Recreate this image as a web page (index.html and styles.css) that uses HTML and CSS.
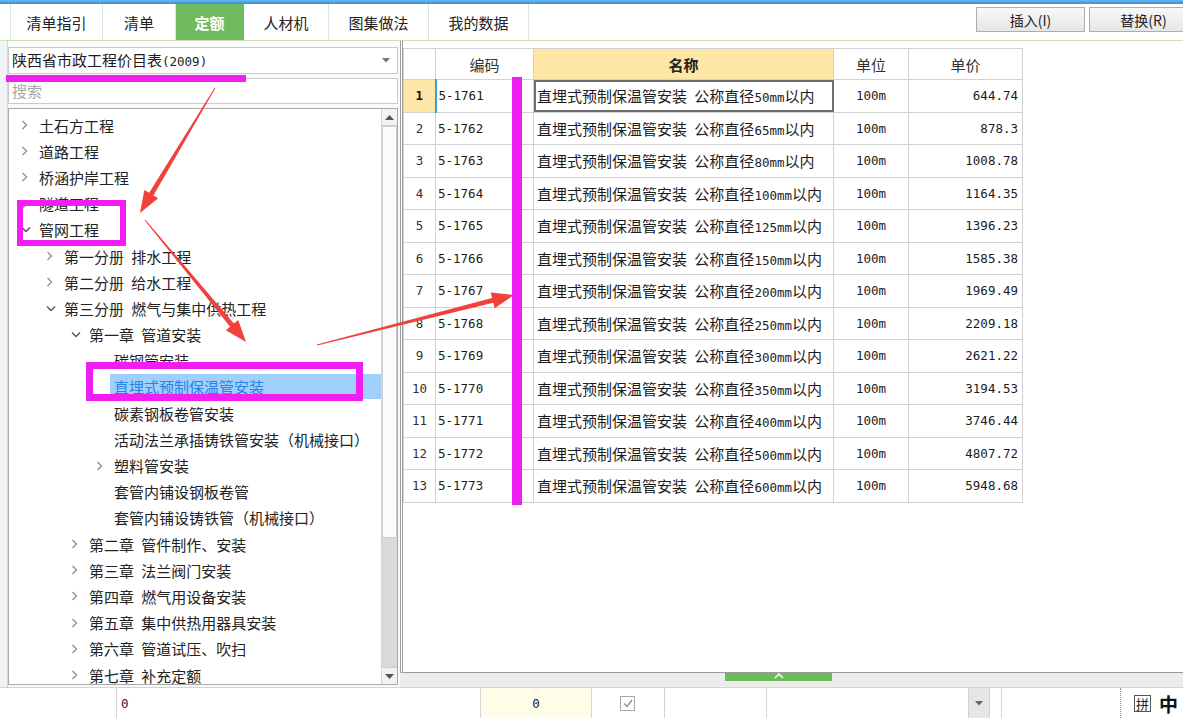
FILE: index.html
```html
<!DOCTYPE html>
<html lang="zh-CN">
<head>
<meta charset="utf-8">
<title>定额</title>
<link rel="stylesheet" href="styles.css">
</head>
<body>
<div class="app">
  <div class="topline"></div>
  <div class="tabbar">
    <div class="tabs">
      <div class="tab t1">清单指引</div>
      <div class="tab t2">清单</div>
      <div class="tab t3 active">定额</div>
      <div class="tab t4">人材机</div>
      <div class="tab t5">图集做法</div>
      <div class="tab t6">我的数据</div>
    </div>
    <div class="actions">
      <button class="btn">插入(I)</button>
      <button class="btn">替换(R)</button>
    </div>
  </div>

  <div class="main">
    <div class="left">
      <div class="edge"></div>
      <div class="leftcol">
        <div class="select">
          <span>陕西省市政工程价目表<span class="mono">(2009)</span></span>
          <svg class="sel-arrow" width="8" height="5" viewBox="0 0 8 5"><polygon points="0,0 8,0 4,4.5" fill="#777"/></svg>
        </div>
        <div class="search">搜索</div>
        <div class="tree">
          <div class="tree-list">
            <div class="row l0"><span class="chev"><svg width="7" height="10" viewBox="0 0 7 10"><polyline points="1.5,1 5.5,5 1.5,9" class="cr"/></svg></span><span class="label">土石方工程</span></div>
            <div class="row l0"><span class="chev"><svg width="7" height="10" viewBox="0 0 7 10"><polyline points="1.5,1 5.5,5 1.5,9" class="cr"/></svg></span><span class="label">道路工程</span></div>
            <div class="row l0"><span class="chev"><svg width="7" height="10" viewBox="0 0 7 10"><polyline points="1.5,1 5.5,5 1.5,9" class="cr"/></svg></span><span class="label">桥涵护岸工程</span></div>
            <div class="row l0"><span class="chev"><svg width="7" height="10" viewBox="0 0 7 10"><polyline points="1.5,1 5.5,5 1.5,9" class="cr"/></svg></span><span class="label">隧道工程</span></div>
            <div class="row l0"><span class="chev"><svg width="10" height="7" viewBox="0 0 10 7"><polyline points="1,1.5 5,5.5 9,1.5" class="cd"/></svg></span><span class="label">管网工程</span></div>
            <div class="row l1"><span class="chev"><svg width="7" height="10" viewBox="0 0 7 10"><polyline points="1.5,1 5.5,5 1.5,9" class="cr"/></svg></span><span class="label">第一分册 排水工程</span></div>
            <div class="row l1"><span class="chev"><svg width="7" height="10" viewBox="0 0 7 10"><polyline points="1.5,1 5.5,5 1.5,9" class="cr"/></svg></span><span class="label">第二分册 给水工程</span></div>
            <div class="row l1"><span class="chev"><svg width="10" height="7" viewBox="0 0 10 7"><polyline points="1,1.5 5,5.5 9,1.5" class="cd"/></svg></span><span class="label">第三分册 燃气与集中供热工程</span></div>
            <div class="row l2"><span class="chev"><svg width="10" height="7" viewBox="0 0 10 7"><polyline points="1,1.5 5,5.5 9,1.5" class="cd"/></svg></span><span class="label">第一章 管道安装</span></div>
            <div class="row l3"><span class="chev"></span><span class="label">碳钢管安装</span></div>
            <div class="row l3 selected"><span class="chev"></span><span class="label">直埋式预制保温管安装</span></div>
            <div class="row l3"><span class="chev"></span><span class="label">碳素钢板卷管安装</span></div>
            <div class="row l3"><span class="chev"></span><span class="label">活动法兰承插铸铁管安装（机械接口）</span></div>
            <div class="row l3"><span class="chev"><svg width="7" height="10" viewBox="0 0 7 10"><polyline points="1.5,1 5.5,5 1.5,9" class="cr"/></svg></span><span class="label">塑料管安装</span></div>
            <div class="row l3"><span class="chev"></span><span class="label">套管内铺设钢板卷管</span></div>
            <div class="row l3"><span class="chev"></span><span class="label">套管内铺设铸铁管（机械接口）</span></div>
            <div class="row l2"><span class="chev"><svg width="7" height="10" viewBox="0 0 7 10"><polyline points="1.5,1 5.5,5 1.5,9" class="cr"/></svg></span><span class="label">第二章 管件制作、安装</span></div>
            <div class="row l2"><span class="chev"><svg width="7" height="10" viewBox="0 0 7 10"><polyline points="1.5,1 5.5,5 1.5,9" class="cr"/></svg></span><span class="label">第三章 法兰阀门安装</span></div>
            <div class="row l2"><span class="chev"><svg width="7" height="10" viewBox="0 0 7 10"><polyline points="1.5,1 5.5,5 1.5,9" class="cr"/></svg></span><span class="label">第四章 燃气用设备安装</span></div>
            <div class="row l2"><span class="chev"><svg width="7" height="10" viewBox="0 0 7 10"><polyline points="1.5,1 5.5,5 1.5,9" class="cr"/></svg></span><span class="label">第五章 集中供热用器具安装</span></div>
            <div class="row l2"><span class="chev"><svg width="7" height="10" viewBox="0 0 7 10"><polyline points="1.5,1 5.5,5 1.5,9" class="cr"/></svg></span><span class="label">第六章 管道试压、吹扫</span></div>
            <div class="row l2"><span class="chev"><svg width="7" height="10" viewBox="0 0 7 10"><polyline points="1.5,1 5.5,5 1.5,9" class="cr"/></svg></span><span class="label">第七章 补充定额</span></div>
          </div>
          <div class="scrollbar">
            <div class="sb-btn"><svg width="9" height="5" viewBox="0 0 9 5"><polygon points="0,5 9,5 4.5,0" fill="#555"/></svg></div>
            <div class="sb-thumb"></div>
            <div class="sb-track"></div>
            <div class="sb-btn down"><svg width="9" height="5" viewBox="0 0 9 5"><polygon points="0,0 9,0 4.5,5" fill="#555"/></svg></div>
          </div>
        </div>
      </div>
    </div>

    <div class="right">
      <div class="grid-area">
        <table class="grid">
          <colgroup><col class="c0"><col class="c1"><col class="c2"><col class="c3"><col class="c4"></colgroup>
          <thead>
            <tr><th></th><th>编码</th><th class="hl">名称</th><th>单位</th><th>单价</th></tr>
          </thead>
          <tbody>
            <tr class="first"><td class="num">1</td><td class="code">5-1761</td><td class="name">直埋式预制保温管安装 公称直径<span class="mono">50mm</span>以内</td><td class="unit">100m</td><td class="price">644.74</td></tr>
            <tr><td class="num">2</td><td class="code">5-1762</td><td class="name">直埋式预制保温管安装 公称直径<span class="mono">65mm</span>以内</td><td class="unit">100m</td><td class="price">878.3</td></tr>
            <tr><td class="num">3</td><td class="code">5-1763</td><td class="name">直埋式预制保温管安装 公称直径<span class="mono">80mm</span>以内</td><td class="unit">100m</td><td class="price">1008.78</td></tr>
            <tr><td class="num">4</td><td class="code">5-1764</td><td class="name">直埋式预制保温管安装 公称直径<span class="mono">100mm</span>以内</td><td class="unit">100m</td><td class="price">1164.35</td></tr>
            <tr><td class="num">5</td><td class="code">5-1765</td><td class="name">直埋式预制保温管安装 公称直径<span class="mono">125mm</span>以内</td><td class="unit">100m</td><td class="price">1396.23</td></tr>
            <tr><td class="num">6</td><td class="code">5-1766</td><td class="name">直埋式预制保温管安装 公称直径<span class="mono">150mm</span>以内</td><td class="unit">100m</td><td class="price">1585.38</td></tr>
            <tr><td class="num">7</td><td class="code">5-1767</td><td class="name">直埋式预制保温管安装 公称直径<span class="mono">200mm</span>以内</td><td class="unit">100m</td><td class="price">1969.49</td></tr>
            <tr><td class="num">8</td><td class="code">5-1768</td><td class="name">直埋式预制保温管安装 公称直径<span class="mono">250mm</span>以内</td><td class="unit">100m</td><td class="price">2209.18</td></tr>
            <tr><td class="num">9</td><td class="code">5-1769</td><td class="name">直埋式预制保温管安装 公称直径<span class="mono">300mm</span>以内</td><td class="unit">100m</td><td class="price">2621.22</td></tr>
            <tr><td class="num">10</td><td class="code">5-1770</td><td class="name">直埋式预制保温管安装 公称直径<span class="mono">350mm</span>以内</td><td class="unit">100m</td><td class="price">3194.53</td></tr>
            <tr><td class="num">11</td><td class="code">5-1771</td><td class="name">直埋式预制保温管安装 公称直径<span class="mono">400mm</span>以内</td><td class="unit">100m</td><td class="price">3746.44</td></tr>
            <tr><td class="num">12</td><td class="code">5-1772</td><td class="name">直埋式预制保温管安装 公称直径<span class="mono">500mm</span>以内</td><td class="unit">100m</td><td class="price">4807.72</td></tr>
            <tr><td class="num">13</td><td class="code">5-1773</td><td class="name">直埋式预制保温管安装 公称直径<span class="mono">600mm</span>以内</td><td class="unit">100m</td><td class="price">5948.68</td></tr>
          </tbody>
        </table>
      </div>
      <div class="splitter">
        <div class="handle"><svg width="10" height="6" viewBox="0 0 10 6"><polyline points="1,5 5,1 9,5" fill="none" stroke="#fff" stroke-width="1.4"/></svg></div>
      </div>
    </div>
  </div>

  <div class="statusbar">
    <div class="sc s0"></div>
    <div class="sc s1 mono">0</div>
    <div class="sc s2 mono">0</div>
    <div class="sc s3"><span class="check"><svg width="10" height="9" viewBox="0 0 10 9"><polyline points="1,4.5 4,7.5 9,1" fill="none" stroke="#8a8a8a" stroke-width="1.3"/></svg></span></div>
    <div class="sc s4"></div>
    <div class="sc s5"><span class="dd-btn"><svg width="8" height="5" viewBox="0 0 8 5"><polygon points="0,0 8,0 4,4.5" fill="#666"/></svg></span></div>
    <div class="sc s6"></div>
    <div class="s7"></div>
    <div class="ime"><span class="pin">拼</span><span class="zh">中</span></div>
  </div>

  <svg class="overlay" width="1183" height="718" viewBox="0 0 1183 718">
    <polygon fill="#f2403a" points="215.4,88.3 153.4,195.4 158.2,198.2 140,213 144.4,190.0 149.2,192.8 214.6,87.7"/>
    <polygon fill="#f2403a" points="144.6,220.3 230.1,326.7 225.8,330.2 246,342 238.2,320.0 233.9,323.5 145.4,219.7"/>
    <polygon fill="#f2403a" points="317.1,345.5 493.3,302.8 494.7,308.2 514,295 490.7,292.6 492.1,298.0 316.9,344.5"/>
    <rect x="6" y="75" width="240" height="7" fill="#f01ef0"/>
    <rect x="20" y="203" width="103" height="40" fill="none" stroke="#f01ef0" stroke-width="6"/>
    <rect x="89.5" y="365.5" width="270" height="32" fill="none" stroke="#f01ef0" stroke-width="7"/>
    <rect x="512" y="77" width="10" height="428" fill="#f01ef0"/>
  </svg>
</div>
</body>
</html>
```
FILE: styles.css
```css
* { box-sizing: border-box; }
html, body { margin: 0; padding: 0; }
body {
  width: 1183px;
  height: 718px;
  overflow: hidden;
  background: #fff;
  font-family: "Noto Sans CJK SC", "Noto Sans", sans-serif;
  font-size: 15px;
  color: #1c1c1c;
}
.mono { font-family: "DejaVu Sans Mono", "Liberation Mono", monospace; font-size: 12.5px; word-spacing: 0; }

.app {
  position: relative;
  width: 1183px;
  height: 718px;
  display: flex;
  flex-direction: column;
}

/* top */
.topline { flex: none; height: 4px; background: linear-gradient(#6cb8ee, #2f8fd8); }
.tabbar {
  flex: none;
  height: 37px;
  display: flex;
  justify-content: space-between;
  padding-left: 10px;
  background: #fff;
  border-bottom: 1px solid #c9e2bd;
}
.tabs { display: flex; height: 36px; border-left: 1px solid #dfe5dc; }
.tab {
  display: flex;
  align-items: center;
  justify-content: center;
  border-right: 1px solid #dfe5dc;
  font-size: 15px;
  line-height: 1;
  color: #222;
}
.t1 { width: 92px; }
.t2 { width: 73px; }
.t3 { width: 68px; }
.t4 { width: 85px; }
.t5 { width: 100px; }
.t6 { width: 100px; }
.tab.active { background: #6fbb5d; color: #fff; font-weight: bold; border-right-color: #6fbb5d; }

.actions { display: flex; gap: 4px; padding-top: 3px; margin-right: -15px; }
.btn {
  width: 109px;
  height: 25px;
  border: 1px solid #adadad;
  background: linear-gradient(#f8f8f8, #e6e6e6);
  font-family: "Noto Sans CJK SC", sans-serif;
  font-size: 14px;
  color: #222;
  padding: 0;
  line-height: 1;
}

/* main */
.main { flex: 1; display: flex; min-height: 0; }
.left { width: 400px; flex: none; display: flex; background: #fafafa; }
.edge { width: 8px; flex: none; background: #f1f4f6; border-right: 1px solid #d2d6d9; }
.leftcol {
  width: 392px;
  display: flex;
  flex-direction: column;
  gap: 4px;
  padding: 6px 2px 2px 0;
}
.select {
  flex: none;
  height: 27px;
  border: 1px solid #c9c9c9;
  background: #fff;
  display: flex;
  align-items: center;
  justify-content: space-between;
  padding: 0 7px 0 3px;
  font-size: 15px;
  line-height: 1;
}
.search {
  flex: none;
  height: 26px;
  border: 1px solid #cacaca;
  background: #fff;
  color: #a8a8a8;
  font-size: 15px;
  line-height: 24px;
  padding-left: 3px;
}
.tree {
  flex: 1;
  min-height: 0;
  border: 1px solid #a9a9a9;
  background: #fff;
  display: flex;
  overflow: hidden;
}
.tree-list { flex: 1; padding-top: 3px; overflow: hidden; }
.row {
  display: flex;
  align-items: center;
  height: 26.2px;
  white-space: nowrap;
  font-size: 15px;
  color: #222;
}
.l0 { padding-left: 5px; }
.l1 { padding-left: 30px; }
.l2 { padding-left: 55px; }
.l3 { padding-left: 80px; }
.chev { width: 25px; flex: none; display: flex; align-items: center; padding-left: 7px; }
.cr { fill: none; stroke: #8d8d8d; stroke-width: 1.3; }
.cd { fill: none; stroke: #555; stroke-width: 1.4; }
.label { padding: 0 4px; margin-left: -4px; line-height: 25px; word-spacing: 4px; }
.selected .label { flex: 1; background: #9ed0fb; color: #2a83e2; }

.scrollbar { width: 16px; flex: none; display: flex; flex-direction: column; border-left: 1px solid #d4d4d4; background: #dadada; }
.sb-btn { height: 17px; flex: none; background: #f2f2f2; display: flex; align-items: center; justify-content: center; border-bottom: 1px solid #cdcdcd; }
.sb-btn.down { border-bottom: none; border-top: 1px solid #cdcdcd; }
.sb-thumb { height: 412px; flex: none; background: #fcfcfc; border: 1px solid #cfcfcf; }
.sb-track { flex: 1; }

/* right */
.right { flex: 1; display: flex; flex-direction: column; min-width: 0; }
.grid-area {
  flex: 1;
  background: #fff;
  border-left: 3px double #9d9d9d;
  border-bottom: 1px solid #9a9a9a;
  padding-top: 7px;
}
.grid {
  border-collapse: collapse;
  table-layout: fixed;
  width: 619px;
}
.c0 { width: 32px; }
.c1 { width: 98px; }
.c2 { width: 300px; }
.c3 { width: 75px; }
.c4 { width: 114px; }
.grid th, .grid td {
  border: 1px solid #d2d2d2;
  padding: 0;
  white-space: nowrap;
  overflow: hidden;
}
.grid th { height: 31px; font-weight: normal; font-size: 15px; color: #333; text-align: center; }
.grid th.hl { background: #fde6a6; font-weight: bold; color: #222; }
.grid td { height: 32.5px; font-size: 15px; }
.grid td.num { text-align: center; font-family: "DejaVu Sans Mono", monospace; font-size: 12.5px; color: #333; }
.grid td.code { padding-left: 2px; font-family: "DejaVu Sans Mono", monospace; font-size: 12.5px; }
.grid td.name { padding-left: 3px; word-spacing: 4px; }
.grid td.unit { text-align: center; font-family: "DejaVu Sans Mono", monospace; font-size: 12.5px; }
.grid td.price { text-align: right; padding-right: 4px; font-family: "DejaVu Sans Mono", monospace; font-size: 12.5px; }
.first td.num { background: #fde6a6; font-weight: bold; color: #111; }
.first td.code { border-left: 2px solid #3f9fdc; }
.first td.name { outline: 2px solid #6f6f6f; outline-offset: -2px; }

.splitter { flex: none; height: 14px; background: #ececec; }
.handle {
  width: 107px;
  height: 8px;
  margin-left: 325px;
  background: #6cbb5a;
  display: flex;
  justify-content: center;
  align-items: flex-start;
}

/* status */
.statusbar {
  flex: none;
  height: 31px;
  display: flex;
  border-top: 1px solid #d4d4d4;
  background: #fff;
  font-size: 12.5px;
}
.sc { border-right: 1px solid #d4d4d4; display: flex; align-items: center; flex: none; }
.s0 { width: 117px; }
.s1 { width: 364px; padding-left: 4px; }
.s2 { width: 111px; justify-content: center; background: #fffde8; }
.s3 { width: 73px; padding-left: 28px; }
.check { width: 15px; height: 15px; border: 1px solid #a8a8a8; display: flex; align-items: center; justify-content: center; background: #fff; }
.s4 { width: 102px; }
.s5 { width: 223px; justify-content: flex-end; align-items: stretch; }
.dd-btn { width: 21px; background: #e6e6e6; display: flex; align-items: center; justify-content: center; border-left: 1px solid #d0d0d0; }
.s6 { width: 12px; }
.s7 { flex: 1; }
.ime {
  width: 63px;
  flex: none;
  border-left: 1px dotted #8f8f8f;
  display: flex;
  align-items: center;
  gap: 8px;
  padding-left: 13px;
}
.pin {
  font-size: 13px;
  line-height: 15px;
  border: 1px solid #555;
  padding: 0 1px;
  color: #222;
}
.zh { font-size: 19px; font-weight: bold; color: #111; line-height: 1; }

.overlay { position: absolute; left: 0; top: 0; pointer-events: none; }
```
